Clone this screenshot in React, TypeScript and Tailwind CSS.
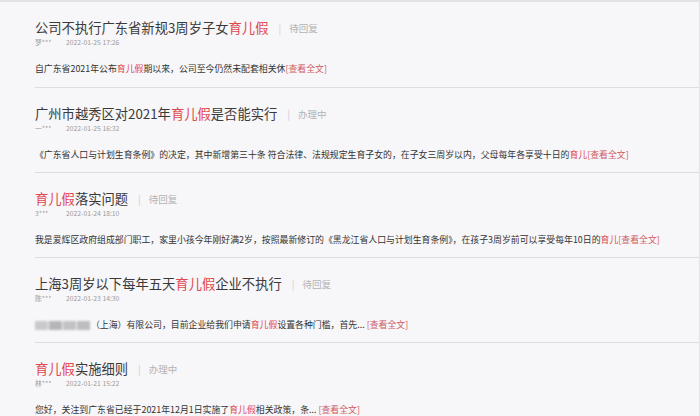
import React from 'react'

type Item = {
  title: React.ReactNode
  status: string
  author: string
  date: string
  body: React.ReactNode
}

const Hl = ({ children }: { children: React.ReactNode }) => (
  <span className="text-[#e0474f]">{children}</span>
)

const More = () => <span className="text-[#cf5a63]">[查看全文]</span>

const items: Item[] = [
  {
    title: (
      <>
        公司不执行广东省新规3周岁子女<Hl>育儿假</Hl>
      </>
    ),
    status: '待回复',
    author: '梦***',
    date: '2022-01-25 17:26',
    body: (
      <>
        自广东省2021年公布<Hl>育儿假</Hl>期以来，公司至今仍然未配套相关休
        <More />
      </>
    ),
  },
  {
    title: (
      <>
        广州市越秀区对2021年<Hl>育儿假</Hl>是否能实行
      </>
    ),
    status: '办理中',
    author: '一***',
    date: '2022-01-25 16:32',
    body: (
      <>
        《广东省人口与计划生育条例》的决定，其中新增第三十条 符合法律、法规规定生育子女的，在子女三周岁以内，父母每年各享受十日的
        <Hl>育儿</Hl>
        <More />
      </>
    ),
  },
  {
    title: (
      <>
        <Hl>育儿假</Hl>落实问题
      </>
    ),
    status: '待回复',
    author: '3***',
    date: '2022-01-24 18:10',
    body: (
      <>
        我是爱辉区政府组成部门职工，家里小孩今年刚好满2岁，按照最新修订的《黑龙江省人口与计划生育条例》，在孩子3周岁前可以享受每年10日的
        <Hl>育儿</Hl>
        <More />
      </>
    ),
  },
  {
    title: (
      <>
        上海3周岁以下每年五天<Hl>育儿假</Hl>企业不执行
      </>
    ),
    status: '待回复',
    author: '陈***',
    date: '2022-01-23 14:30',
    body: (
      <>
        <span className="inline-flex align-middle gap-[1px] mr-[1px] blur-[1px]">
          <span className="w-[13px] h-[9px] bg-[#c9c9cb]" />
          <span className="w-[13px] h-[9px] bg-[#b5b5b8]" />
          <span className="w-[13px] h-[9px] bg-[#c2c2c4]" />
          <span className="w-[13px] h-[9px] bg-[#bdbdc0]" />
        </span>
        （上海）有限公司，目前企业给我们申请<Hl>育儿假</Hl>设置各种门槛，首先... <More />
      </>
    ),
  },
  {
    title: (
      <>
        <Hl>育儿假</Hl>实施细则
      </>
    ),
    status: '办理中',
    author: '林***',
    date: '2022-01-21 15:22',
    body: (
      <>
        您好，关注到广东省已经于2021年12月1日实施了<Hl>育儿假</Hl>相关政策，条... <More />
      </>
    ),
  },
]

export default function App() {
  return (
    <div
      className="w-[700px] h-[416px] overflow-hidden bg-[#f7f6f8] border-t-2 border-r border-[#e3e2e5] pl-[35px]"
      style={{ fontFamily: '"Noto Sans CJK SC", "Noto Sans", sans-serif' }}
    >
      {items.map((item, i) => (
        <div key={i} className="h-[85px] first:h-[86px] border-b border-[#dedde0] pt-[18px] first:pt-[18px]">
          <div className="flex items-center h-[16px]">
            <span className="text-[13.3px] leading-[16px] text-[#3a3a3a] whitespace-nowrap">{item.title}</span>
            <span className="ml-[10px] text-[10px] leading-[16px] text-[#cfcfd2]">|</span>
            <span className="ml-[8px] text-[9.5px] leading-[16px] text-[#b3b3b6]">{item.status}</span>
          </div>
          <div className="flex items-center h-[10px] mt-[1px] text-[6.8px] leading-[10px] text-[#9a9a9d]">
            <span className="w-[31px]">{item.author}</span>
            <span>{item.date}</span>
          </div>
          <div className="mt-[16px] h-[12px] text-[8.9px] leading-[12px] text-[#333] whitespace-nowrap">{item.body}</div>
        </div>
      ))}
    </div>
  )
}
